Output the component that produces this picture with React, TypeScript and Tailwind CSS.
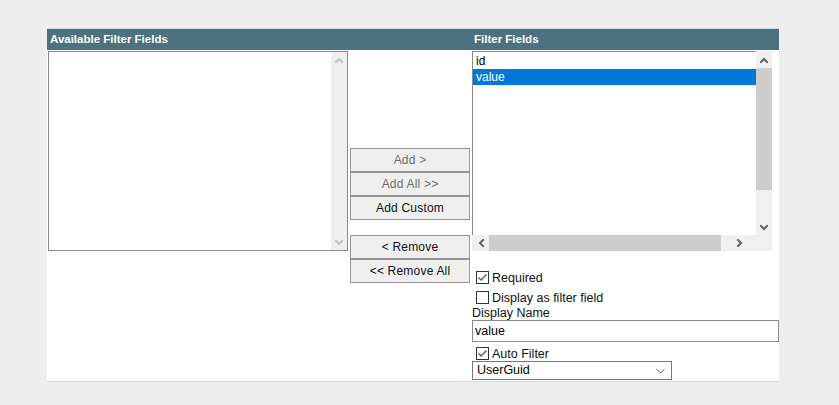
import React from "react";

const font = { fontFamily: '"Liberation Sans", Arial, sans-serif' };

function Chev({ dir, color, size = 8 }: { dir: "up" | "down" | "left" | "right"; color: string; size?: number }) {
  const paths: Record<string, string> = {
    up: "M1 6 L4 3 L7 6",
    down: "M1 3 L4 6 L7 3",
    left: "M5 1 L2 4 L5 7",
    right: "M3 1 L6 4 L3 7",
  };
  return (
    <svg width={size} height={size} viewBox="0 0 8 8">
      <path d={paths[dir]} fill="none" stroke={color} strokeWidth="2" strokeLinecap="square" />
    </svg>
  );
}

function Check({ checked }: { checked: boolean }) {
  return (
    <div className="w-[13px] h-[13px] border border-[#333333] bg-white flex items-center justify-center shrink-0">
      {checked && (
        <svg width="11" height="11" viewBox="0 0 11 11">
          <path d="M1.5 5.5 L4 8 L9.5 2.5" fill="none" stroke="#555555" strokeWidth="1.3" />
        </svg>
      )}
    </div>
  );
}

function Btn({ label, disabled }: { label: string; disabled?: boolean }) {
  return (
    <div
      className={`h-[24px] w-[120px] border border-[#949494] bg-[#efefef] flex items-center justify-center text-[12px] tracking-[0.2px] ${
        disabled ? "text-[#6d6d6d]" : "text-[#111111]"
      }`}
    >
      {label}
    </div>
  );
}

export default function App() {
  return (
    <div className="w-[839px] h-[405px] bg-[#eeeeee] pt-[28px] pl-[47px]" style={font}>
      <div className="w-[732px] bg-white border-t border-b border-[#c9dfe8] pb-[1px]">
        {/* header */}
        <div className="flex h-[21px] bg-[#4d717e] text-white font-bold text-[11.5px] items-center">
          <div className="w-[424px] pl-[3px]">Available Filter Fields</div>
          <div className="pl-[3px]">Filter Fields</div>
        </div>
        <div className="flex pt-[1px]">
          {/* left */}
          <div className="w-[301px] pl-[1px]">
            <div className="w-[300px] h-[200px] border border-[#8a8a8a] flex justify-end">
              <div className="w-[16px] h-full bg-[#efefef] flex flex-col justify-between items-center py-[4px]">
                <Chev dir="up" color="#c4c4c4" />
                <Chev dir="down" color="#c4c4c4" />
              </div>
            </div>
          </div>
          {/* middle */}
          <div className="w-[122px] pl-[2px] pt-[97px] flex flex-col">
            <Btn label="Add >" disabled />
            <Btn label="Add All >>" disabled />
            <Btn label="Add Custom" />
            <div className="h-[15px]" />
            <Btn label="< Remove" />
            <Btn label="<< Remove All" />
          </div>
          {/* right */}
          <div className="w-[309px] pl-[2px] flex flex-col">
            <div className="flex h-[200px]">
              <div className="w-[284px] flex flex-col">
                <div className="flex-1 border-t border-l border-[#8a8a8a] pt-[1px] text-[12px] text-black">
                  <div className="h-[16px] leading-[16px] pl-[3px]">id</div>
                  <div className="h-[16px] leading-[16px] pl-[3px] bg-[#0078d7] text-white">value</div>
                </div>
                <div className="h-[16px] bg-[#f0f0f0] flex items-center">
                  <div className="w-[17px] flex justify-center pl-[2px]">
                    <Chev dir="left" color="#606060" />
                  </div>
                  <div className="w-[232px] h-full bg-[#cdcdcd]" />
                  <div className="flex-1 flex justify-center">
                    <Chev dir="right" color="#606060" />
                  </div>
                </div>
              </div>
              <div className="w-[16px] h-full bg-[#f0f0f0] flex flex-col">
                <div className="h-[17px] flex items-center justify-center">
                  <Chev dir="up" color="#606060" />
                </div>
                <div className="h-[122px] bg-[#cdcdcd]" />
                <div className="h-[28px]" />
                <div className="h-[17px] flex items-center justify-center">
                  <Chev dir="down" color="#606060" />
                </div>
                <div className="h-[16px]" />
              </div>
            </div>
            <div className="h-[16px]" />
            <div className="h-[20px] flex items-center pl-[4px] gap-[3px] text-[12.5px] text-[#111]">
              <Check checked />
              <span className="pt-[3px]">Required</span>
            </div>
            <div className="h-[20px] flex items-center pl-[4px] gap-[3px] text-[12.5px] text-[#111]">
              <Check checked={false} />
              <span className="pt-[3px]">Display as filter field</span>
            </div>
            <div className="h-[13px] leading-[13px] text-[12.5px] text-[#111]">Display Name</div>
            <div className="h-[22px] w-[307px] border border-[#8a8a8a] flex items-center pl-[2px] text-[12.5px] text-black">
              value
            </div>
            <div className="h-[16px] mt-[3px] flex items-center pl-[4px] gap-[3px] text-[12.5px] text-[#111]">
              <Check checked />
              <span className="pt-[3px]">Auto Filter</span>
            </div>
            <div className="h-[19px] w-[200px] border border-[#777777] flex items-center justify-between pl-[4px] pr-[6px] text-[12.5px] text-black">
              <span>UserGuid</span>
              <svg width="9" height="6" viewBox="0 0 9 6">
                <path d="M0.5 1 L4.5 5 L8.5 1" fill="none" stroke="#555" strokeWidth="1" />
              </svg>
            </div>
          </div>
        </div>
      </div>
    </div>
  );
}
